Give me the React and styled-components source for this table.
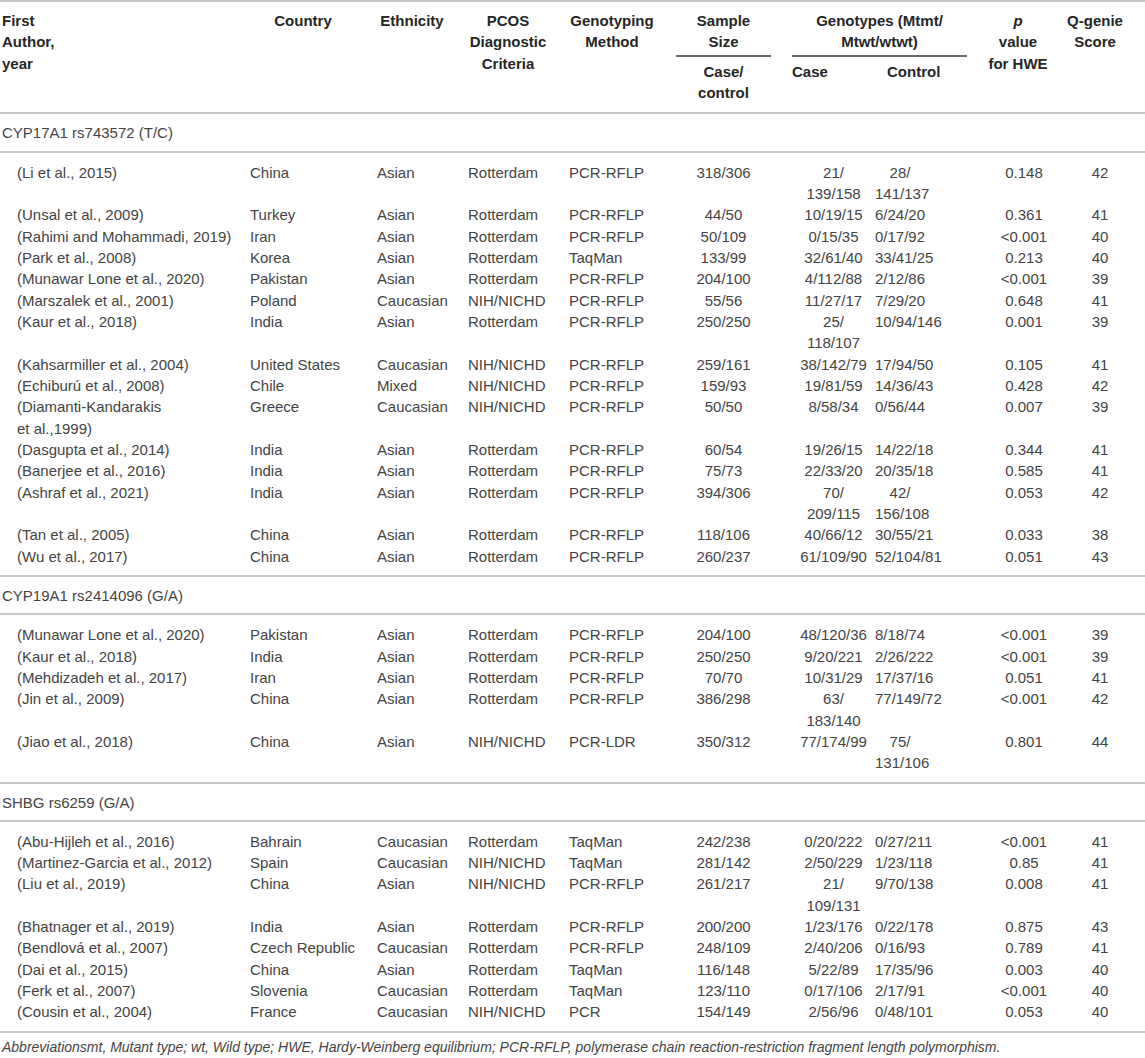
import React from 'react'
import styled, { createGlobalStyle } from 'styled-components'

const GlobalStyle = createGlobalStyle`
  html, body {
    margin: 0;
    padding: 0;
    background: #fff;
  }
  body {
    font-family: "Liberation Sans", Arial, Helvetica, sans-serif;
    font-size: 15px;
    color: #444;
  }
`

const COLS = '250px 127px 91px 101px 107px 116px 83px 92px 93px 85px'
const LINE = '21.33px'
const RULE = '2px solid #c9c9c9'

const Table = styled.div`
  width: 1145px;
  border-top: ${RULE};
`

const Head = styled.div`
  display: grid;
  grid-template-columns: ${COLS};
  grid-template-rows: auto auto;
  padding: 8px 0 9px;
  border-bottom: ${RULE};
  font-weight: 700;
  color: #262626;
  line-height: ${LINE};
`

const HeadCell = styled.div`
  grid-column: ${p => p.$col};
  grid-row: ${p => p.$row || '1 / span 2'};
  text-align: ${p => p.$align || 'center'};
  padding-left: ${p => p.$pl || 0}px;
  padding-right: ${p => p.$pr || 0}px;
  white-space: pre;
`

const GroupHead = styled.div`
  grid-column: ${p => p.$col};
  grid-row: 1;
  margin-right: ${p => p.$mr || 0}px;
  padding-bottom: 2px;
  border-bottom: 2px solid #6a6a6a;
  text-align: center;
  white-space: pre;
`

const SubHead = styled.div`
  grid-column: ${p => p.$col};
  grid-row: 2;
  margin-top: 4px;
  text-align: ${p => p.$align || 'center'};
  padding-left: ${p => p.$pl || 0}px;
  padding-right: ${p => p.$pr || 0}px;
  white-space: pre;
`

const SectionTitle = styled.div`
  padding: 8px 0 7px 2px;
  line-height: ${LINE};
  border-bottom: ${RULE};
`

const Body = styled.div`
  padding: 9px 0 8px;
  border-bottom: ${RULE};
`

const Row = styled.div`
  display: grid;
  grid-template-columns: ${COLS};
  line-height: ${LINE};
`

const Cell = styled.div`
  text-align: ${p => p.$align || 'left'};
  padding-left: ${p => p.$pl || 0}px;
  padding-right: ${p => p.$pr || 0}px;
  white-space: pre;
`

const Italic = styled.i`
  font-style: italic;
`

const Note = styled.p`
  margin: 0;
  padding: 6px 0 0 2px;
  font-size: 14px;
  line-height: 17px;
  font-style: italic;
  color: #444;
`

// alignment of the data cells, column by column
const dataCols = [
  { align: 'left', pl: 17 },
  { align: 'left' },
  { align: 'left' },
  { align: 'left' },
  { align: 'left' },
  { align: 'center', pr: 21 },
  { align: 'center' },
  { align: 'center', pr: 42 },
  { align: 'center', pl: 21 },
  { align: 'center', pr: 5 }
]

const sections = [
  {
    title: 'CYP17A1 rs743572 (T/C)',
    rows: [
      ['(Li et al., 2015)', 'China', 'Asian', 'Rotterdam', 'PCR-RFLP', '318/306', '21/\n139/158', '28/\n141/137', '0.148', '42'],
      ['(Unsal et al., 2009)', 'Turkey', 'Asian', 'Rotterdam', 'PCR-RFLP', '44/50', '10/19/15', '6/24/20', '0.361', '41'],
      ['(Rahimi and Mohammadi, 2019)', 'Iran', 'Asian', 'Rotterdam', 'PCR-RFLP', '50/109', '0/15/35', '0/17/92', '<0.001', '40'],
      ['(Park et al., 2008)', 'Korea', 'Asian', 'Rotterdam', 'TaqMan', '133/99', '32/61/40', '33/41/25', '0.213', '40'],
      ['(Munawar Lone et al., 2020)', 'Pakistan', 'Asian', 'Rotterdam', 'PCR-RFLP', '204/100', '4/112/88', '2/12/86', '<0.001', '39'],
      ['(Marszalek et al., 2001)', 'Poland', 'Caucasian', 'NIH/NICHD', 'PCR-RFLP', '55/56', '11/27/17', '7/29/20', '0.648', '41'],
      ['(Kaur et al., 2018)', 'India', 'Asian', 'Rotterdam', 'PCR-RFLP', '250/250', '25/\n118/107', '10/94/146', '0.001', '39'],
      ['(Kahsarmiller et al., 2004)', 'United States', 'Caucasian', 'NIH/NICHD', 'PCR-RFLP', '259/161', '38/142/79', '17/94/50', '0.105', '41'],
      ['(Echiburú et al., 2008)', 'Chile', 'Mixed', 'NIH/NICHD', 'PCR-RFLP', '159/93', '19/81/59', '14/36/43', '0.428', '42'],
      ['(Diamanti-Kandarakis\net al.,1999)', 'Greece', 'Caucasian', 'NIH/NICHD', 'PCR-RFLP', '50/50', '8/58/34', '0/56/44', '0.007', '39'],
      ['(Dasgupta et al., 2014)', 'India', 'Asian', 'Rotterdam', 'PCR-RFLP', '60/54', '19/26/15', '14/22/18', '0.344', '41'],
      ['(Banerjee et al., 2016)', 'India', 'Asian', 'Rotterdam', 'PCR-RFLP', '75/73', '22/33/20', '20/35/18', '0.585', '41'],
      ['(Ashraf et al., 2021)', 'India', 'Asian', 'Rotterdam', 'PCR-RFLP', '394/306', '70/\n209/115', '42/\n156/108', '0.053', '42'],
      ['(Tan et al., 2005)', 'China', 'Asian', 'Rotterdam', 'PCR-RFLP', '118/106', '40/66/12', '30/55/21', '0.033', '38'],
      ['(Wu et al., 2017)', 'China', 'Asian', 'Rotterdam', 'PCR-RFLP', '260/237', '61/109/90', '52/104/81', '0.051', '43']
    ]
  },
  {
    title: 'CYP19A1 rs2414096 (G/A)',
    rows: [
      ['(Munawar Lone et al., 2020)', 'Pakistan', 'Asian', 'Rotterdam', 'PCR-RFLP', '204/100', '48/120/36', '8/18/74', '<0.001', '39'],
      ['(Kaur et al., 2018)', 'India', 'Asian', 'Rotterdam', 'PCR-RFLP', '250/250', '9/20/221', '2/26/222', '<0.001', '39'],
      ['(Mehdizadeh et al., 2017)', 'Iran', 'Asian', 'Rotterdam', 'PCR-RFLP', '70/70', '10/31/29', '17/37/16', '0.051', '41'],
      ['(Jin et al., 2009)', 'China', 'Asian', 'Rotterdam', 'PCR-RFLP', '386/298', '63/\n183/140', '77/149/72', '<0.001', '42'],
      ['(Jiao et al., 2018)', 'China', 'Asian', 'NIH/NICHD', 'PCR-LDR', '350/312', '77/174/99', '75/\n131/106', '0.801', '44']
    ]
  },
  {
    title: 'SHBG rs6259 (G/A)',
    rows: [
      ['(Abu-Hijleh et al., 2016)', 'Bahrain', 'Caucasian', 'Rotterdam', 'TaqMan', '242/238', '0/20/222', '0/27/211', '<0.001', '41'],
      ['(Martinez-Garcia et al., 2012)', 'Spain', 'Caucasian', 'NIH/NICHD', 'TaqMan', '281/142', '2/50/229', '1/23/118', '0.85', '41'],
      ['(Liu et al., 2019)', 'China', 'Asian', 'NIH/NICHD', 'PCR-RFLP', '261/217', '21/\n109/131', '9/70/138', '0.008', '41'],
      ['(Bhatnager et al., 2019)', 'India', 'Asian', 'Rotterdam', 'PCR-RFLP', '200/200', '1/23/176', '0/22/178', '0.875', '43'],
      ['(Bendlová et al., 2007)', 'Czech Republic', 'Caucasian', 'Rotterdam', 'PCR-RFLP', '248/109', '2/40/206', '0/16/93', '0.789', '41'],
      ['(Dai et al., 2015)', 'China', 'Asian', 'Rotterdam', 'TaqMan', '116/148', '5/22/89', '17/35/96', '0.003', '40'],
      ['(Ferk et al., 2007)', 'Slovenia', 'Caucasian', 'Rotterdam', 'TaqMan', '123/110', '0/17/106', '2/17/91', '<0.001', '40'],
      ['(Cousin et al., 2004)', 'France', 'Caucasian', 'NIH/NICHD', 'PCR', '154/149', '2/56/96', '0/48/101', '0.053', '40']
    ]
  }
]

const TableHead = () => (
  <Head>
    <HeadCell $col={1} $align="left" $pl={2}>{'First\nAuthor,\nyear'}</HeadCell>
    <HeadCell $col={2} $pr={21}>Country</HeadCell>
    <HeadCell $col={3} $pr={21}>Ethnicity</HeadCell>
    <HeadCell $col={4} $pr={21}>{'PCOS\nDiagnostic\nCriteria'}</HeadCell>
    <HeadCell $col={5} $pr={21}>{'Genotyping\nMethod'}</HeadCell>
    <GroupHead $col={6} $mr={21}>{'Sample\nSize'}</GroupHead>
    <SubHead $col={6} $pr={21}>{'Case/\ncontrol'}</SubHead>
    <GroupHead $col="7 / span 2">{'Genotypes (Mtmt/\nMtwt/wtwt)'}</GroupHead>
    <SubHead $col={7} $align="left">Case</SubHead>
    <SubHead $col={8} $align="left" $pl={12}>Control</SubHead>
    <HeadCell $col={9} $pl={9}>
      <Italic>p</Italic>
      {'\nvalue\nfor HWE'}
    </HeadCell>
    <HeadCell $col={10} $pr={15}>{'Q-genie\nScore'}</HeadCell>
  </Head>
)

const Section = ({ section }) => (
  <>
    <SectionTitle>{section.title}</SectionTitle>
    <Body>
      {section.rows.map((row, i) => (
        <Row key={i}>
          {row.map((val, j) => (
            <Cell key={j} $align={dataCols[j].align} $pl={dataCols[j].pl} $pr={dataCols[j].pr}>
              {val}
            </Cell>
          ))}
        </Row>
      ))}
    </Body>
  </>
)

export default function App() {
  return (
    <>
      <GlobalStyle />
      <Table>
        <TableHead />
        {sections.map(s => (
          <Section key={s.title} section={s} />
        ))}
      </Table>
      <Note>
        Abbreviationsmt, Mutant type; wt, Wild type; HWE, Hardy-Weinberg equilibrium; PCR-RFLP, polymerase chain
        reaction-restriction fragment length polymorphism.
      </Note>
    </>
  )
}
